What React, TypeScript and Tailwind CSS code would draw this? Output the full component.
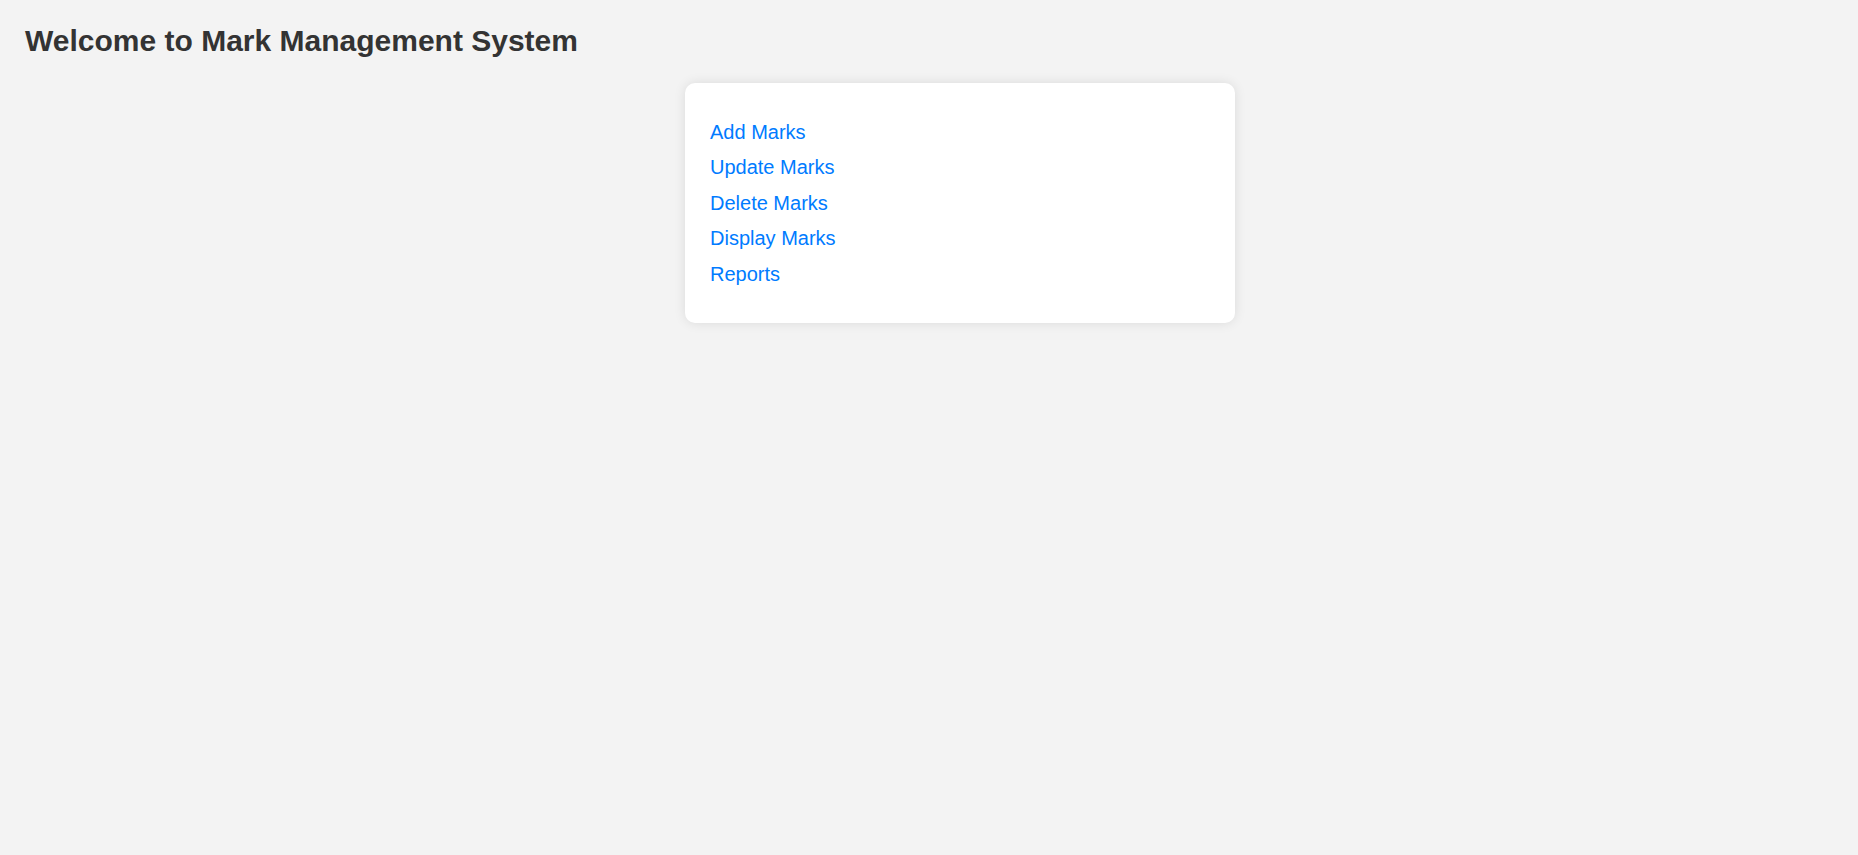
const links = ["Add Marks", "Update Marks", "Delete Marks", "Display Marks", "Reports"];

export default function App() {
  return (
    <div className="min-h-screen bg-[#f3f3f3] font-['Liberation_Sans',Arial,sans-serif]">
      <h1 className="pl-[25px] pt-[23.5px] text-[30px] font-bold leading-[34.5px] text-[#333333]">
        Welcome to Mark Management System
      </h1>

      <div className="flex justify-center pl-[62px] pt-[25px]">
        <div className="w-[550px] rounded-[10px] bg-white p-[25px] pb-[25px] shadow-[0_0_12px_rgba(0,0,0,0.1)]">
          <ul className="pt-[12.5px]">
            {links.map((label) => (
              <li key={label} className="mb-[12.5px] text-[20px] leading-[23px]">
                <a href="#" className="text-[#007bff] no-underline">
                  {label}
                </a>
              </li>
            ))}
          </ul>
        </div>
      </div>
    </div>
  );
}
